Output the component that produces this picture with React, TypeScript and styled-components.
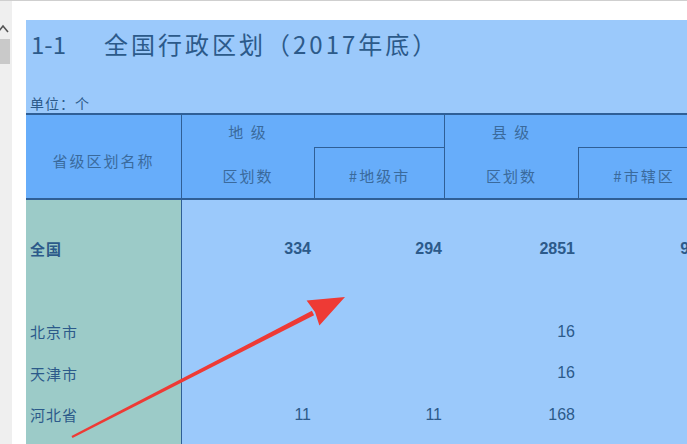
import React from "react";
import styled, { createGlobalStyle } from "styled-components";

const Global = createGlobalStyle`
  html, body { margin: 0; padding: 0; width: 687px; height: 444px; overflow: hidden; background: #fff; }
  #root { width: 687px; height: 444px; }
`;

const LINE = "#2f5f96";
const TEXT = "#2c5a8a";
const COLS = "156px 132px 131px 133px 132px 1fr";

const Frame = styled.div`
  position: relative;
  width: 687px;
  height: 444px;
  overflow: hidden;
  display: flex;
  box-sizing: border-box;
  border-top: 1px solid #cfcfcf;
  font-family: "Noto Sans CJK SC", "Noto Sans", sans-serif;
  color: ${TEXT};
`;

const Rail = styled.div`
  width: 12px;
  flex: none;
  background: #efefef;
  display: flex;
  flex-direction: column;
  align-items: flex-start;
  padding-top: 21px;
  box-sizing: border-box;
`;

const Chevron = styled.svg`
  display: block;
  width: 12px;
  height: 12px;
`;

const Thumb = styled.div`
  margin-top: 5px;
  width: 10px;
  height: 25px;
  background: #c9c9c9;
`;

const Content = styled.div`
  flex: 1;
  min-width: 0;
  background: #fff;
  padding: 19px 0 0 14px;
  display: flex;
`;

const Sheet = styled.div`
  flex: 1;
  min-width: 0;
  background: #9bc9fb;
  display: flex;
  flex-direction: column;
  overflow: hidden;
  & > * { flex: none; }
`;

const TitleRow = styled.div`
  height: 73px;
  box-sizing: border-box;
  padding: 10px 0 0 5px;
  display: flex;
  align-items: flex-start;
  line-height: 28px;
  font-size: 24px;
  white-space: nowrap;
`;

const TitleNo = styled.span`
  width: 73px;
  flex: none;
`;

const TitleText = styled.span`
  letter-spacing: 3px;
`;

const Unit = styled.div`
  height: 20px;
  line-height: 20px;
  padding-left: 4px;
  font-size: 14px;
  letter-spacing: 1px;
  white-space: nowrap;
`;

const Header = styled.div`
  display: grid;
  grid-template-columns: ${COLS};
  grid-template-rows: 33px 50px;
  background: #67adfa;
  border-top: 2px solid ${LINE};
  border-bottom: 2px solid ${LINE};
  width: 800px;
`;

const HCell = styled.div<{ $col: string; $row: string; $right?: boolean; $left?: boolean; $bottom?: boolean; $pt?: number }>`
  grid-column: ${(p) => p.$col};
  grid-row: ${(p) => p.$row};
  display: flex;
  align-items: center;
  justify-content: center;
  box-sizing: border-box;
  padding-top: ${(p) => p.$pt ?? 0}px;
  font-size: 15px;
  letter-spacing: 2px;
  color: #3a6a9c;
  white-space: nowrap;
  border-right: ${(p) => (p.$right ? `1px solid ${LINE}` : "none")};
  border-left: ${(p) => (p.$left ? `1px solid ${LINE}` : "none")};
  border-bottom: ${(p) => (p.$bottom ? `1px solid ${LINE}` : "none")};
`;

const Body = styled.div`
  display: grid;
  grid-template-columns: ${COLS};
  grid-template-rows: 28px;
  grid-auto-rows: 41.5px;
  width: 800px;
`;

const Spacer = styled.div<{ $name?: boolean }>`
  background: ${(p) => (p.$name ? "#9ccbc8" : "transparent")};
  border-right: ${(p) => (p.$name ? `1px solid ${LINE}` : "none")};
`;

const NameCell = styled.div<{ $bold?: boolean }>`
  background: #9ccbc8;
  border-right: 1px solid ${LINE};
  display: flex;
  align-items: center;
  padding-left: 4px;
  font-size: 15px;
  letter-spacing: 1px;
  font-weight: ${(p) => (p.$bold ? 700 : 400)};
  white-space: nowrap;
`;

const NumCell = styled.div<{ $bold?: boolean }>`
  display: flex;
  align-items: center;
  justify-content: flex-end;
  padding-right: 3px;
  font-family: "Liberation Sans", Arial, sans-serif;
  font-size: 16px;
  font-weight: ${(p) => (p.$bold ? 700 : 400)};
  white-space: nowrap;
`;

const Overlay = styled.svg`
  position: absolute;
  left: 0;
  top: 0;
  width: 687px;
  height: 444px;
  pointer-events: none;
`;

type Row = { name: string; vals: string[]; bold?: boolean };

const rows: Row[] = [
  { name: "全国", vals: ["334", "294", "2851", "962"], bold: true },
  { name: "", vals: ["", "", "", ""] },
  { name: "北京市", vals: ["", "", "16", "16"] },
  { name: "天津市", vals: ["", "", "16", "16"] },
  { name: "河北省", vals: ["11", "11", "168", "47"] },
  { name: "山西省", vals: ["11", "11", "117", "23"] },
];

export default function App() {
  return (
    <>
      <Global />
      <Frame>
        <Rail>
          <Chevron viewBox="0 0 12 12">
            <polyline points="-1,9 3,4 8,10" fill="none" stroke="#555" strokeWidth="1.6" />
          </Chevron>
          <Thumb />
        </Rail>
        <Content>
          <Sheet>
            <TitleRow>
              <TitleNo>1-1</TitleNo>
              <TitleText>全国行政区划（2017年底）</TitleText>
            </TitleRow>
            <Unit>单位：个</Unit>
            <Header>
              <HCell $col="1" $row="1 / 3" $right $pt={8}>省级区划名称</HCell>
              <HCell $col="2" $row="1">地 级</HCell>
              <HCell $col="3" $row="1" $right $bottom />
              <HCell $col="2" $row="2" $pt={4}>区划数</HCell>
              <HCell $col="3" $row="2" $left $right $pt={4}>#地级市</HCell>
              <HCell $col="4" $row="1">县 级</HCell>
              <HCell $col="5 / 7" $row="1" $bottom />
              <HCell $col="4" $row="2" $pt={4}>区划数</HCell>
              <HCell $col="5" $row="2" $left $right $pt={4}>#市辖区</HCell>
            </Header>
            <Body>
              <Spacer $name />
              <Spacer />
              <Spacer />
              <Spacer />
              <Spacer />
              <Spacer />
              {rows.map((r, i) => (
                <React.Fragment key={i}>
                  <NameCell $bold={r.bold}>{r.name}</NameCell>
                  {r.vals.map((v, j) => (
                    <NumCell key={j} $bold={r.bold}>{v}</NumCell>
                  ))}
                  <NumCell />
                </React.Fragment>
              ))}
            </Body>
          </Sheet>
        </Content>
        <Overlay viewBox="0 0 687 444">
          <polygon points="72.5,437 71.5,435 311.9,309.8 314.1,314.2" fill="#ee3a35" />
          <polygon points="345,296 306.6,299.5 315,311 319.4,324.5" fill="#ee3a35" />
        </Overlay>
      </Frame>
    </>
  );
}
